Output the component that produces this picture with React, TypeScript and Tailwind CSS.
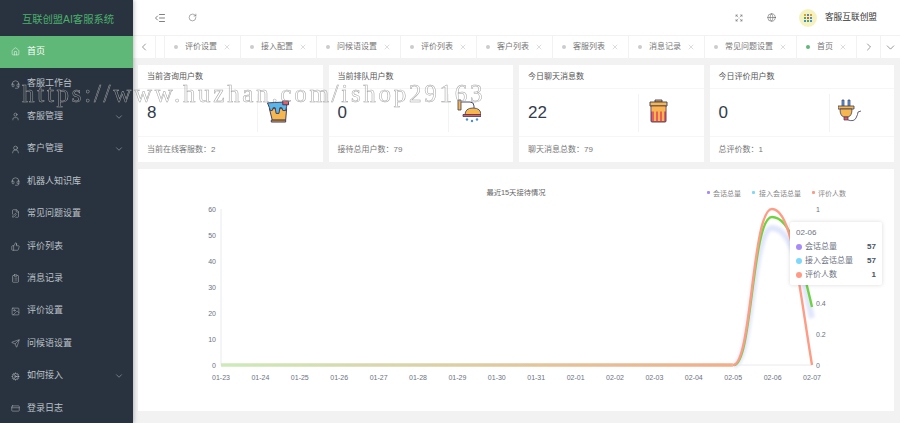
import {
  ChevronDown,
  ChevronLeft,
  ChevronRight,
  ClipboardList,
  Cog,
  CreditCard,
  Expand,
  FilePen,
  Globe,
  Headset,
  Home,
  ImageIcon,
  IndentDecrease,
  RotateCw,
  Send,
  ThumbsUp,
  User,
  UserRound,
  X,
  type LucideIcon,
} from 'lucide-react'

const NAV_ITEMS: { label: string; icon: LucideIcon; arrow?: boolean; active?: boolean }[] = [
  { label: '首页', icon: Home, active: true },
  { label: '客服工作台', icon: Headset },
  { label: '客服管理', icon: User, arrow: true },
  { label: '客户管理', icon: UserRound, arrow: true },
  { label: '机器人知识库', icon: Headset },
  { label: '常见问题设置', icon: FilePen },
  { label: '评价列表', icon: ThumbsUp },
  { label: '消息记录', icon: ClipboardList },
  { label: '评价设置', icon: ImageIcon },
  { label: '问候语设置', icon: Send },
  { label: '如何接入', icon: Cog, arrow: true },
  { label: '登录日志', icon: CreditCard },
]

const TABS = ['评价设置', '接入配置', '问候语设置', '评价列表', '客户列表', '客服列表', '消息记录', '常见问题设置', '首页']

const STAT_CARDS = [
  { title: '当前咨询用户数', value: '8', footer: '当前在线客服数：2', icon: <BucketIcon /> },
  { title: '当前排队用户数', value: '0', footer: '接待总用户数：79', icon: <ShowerIcon /> },
  { title: '今日聊天消息数', value: '22', footer: '聊天消息总数：79', icon: <TrashIcon /> },
  { title: '今日评价用户数', value: '0', footer: '总评价数：1', icon: <PlugIcon /> },
]

const X_LABELS = ['01-23', '01-24', '01-25', '01-26', '01-27', '01-28', '01-29', '01-30', '01-31', '02-01', '02-02', '02-03', '02-04', '02-05', '02-06', '02-07']
const LEFT_TICKS = ['60', '50', '40', '30', '20', '10', '0']
// 0.8 and 0.6 sit behind the tooltip
const RIGHT_TICKS = [
  { label: '1', y: 43 },
  { label: '0.4', y: 136.600 },
  { label: '0.2', y: 167.800 },
  { label: '0', y: 199 },
]

const TOOLTIP_ROWS = [
  { label: '会话总量', value: 57, color: 'bg-[#a78bfa]' },
  { label: '接入会话总量', value: 57, color: 'bg-[#7dd8fb]' },
  { label: '评价人数', value: 1, color: 'bg-[#ff9a85]' },
]

function BucketIcon() {
  return (
    <svg viewBox="0 0 24 24" className="h-[23px] w-6">
      <path d="M3 9h18l-1 12H6z" fill="#f6b84e" stroke="#3d3a5c" strokeWidth="1" />
      <path d="M5 21h15v2H5z" fill="#e9a33c" stroke="#3d3a5c" strokeWidth="1" />
      <path d="M1 3l20-1v5l-1 4h-3l-1-3-2 0-1 6h-3l-1-6h-2l-1 3H4L3 8z" fill="#58b7e8" stroke="#3d3a5c" strokeWidth="1" />
      <path d="M17 1h6v4h-6z" fill="#ea5a5f" stroke="#3d3a5c" strokeWidth="1" />
    </svg>
  )
}

function ShowerIcon() {
  return (
    <svg viewBox="0 0 24 24" className="h-6 w-6">
      <path d="M1 1h3v10H1z" fill="#f6b84e" stroke="#3d3a5c" strokeWidth="0.8" />
      <path d="M4 3h9q4 0 4 4v2" fill="none" stroke="#3d3a5c" strokeWidth="0.9" />
      <path d="M8 16q0-7 8-7t8 7z" fill="#f6b84e" stroke="#3d3a5c" strokeWidth="0.8" />
      <path d="M6 15.500h18v2H6z" fill="#ea5a5f" stroke="#3d3a5c" strokeWidth="0.8" />
      <circle cx="10" cy="20.500" r="1.200" fill="#4a8fd8" />
      <circle cx="15" cy="22" r="1.200" fill="#4a8fd8" />
      <circle cx="20" cy="20.500" r="1.200" fill="#4a8fd8" />
    </svg>
  )
}

function TrashIcon() {
  return (
    <svg viewBox="0 0 24 24" className="h-6 w-6">
      <path d="M8 1h7v2H8z" fill="#f6b84e" stroke="#3d3a5c" strokeWidth="0.9" />
      <path d="M3 3h17v4H3z" fill="#f6b84e" stroke="#3d3a5c" strokeWidth="0.9" />
      <path d="M4 7h15v15a1 1 0 0 1-1 1H5a1 1 0 0 1-1-1z" fill="#ea5a5f" stroke="#3d3a5c" strokeWidth="0.9" />
      <path d="M4.500 7.500h14v5h-14zM7 12h2v10H7zM11 12h2v10h-2zM15 12h2v10h-2z" fill="#f6b84e" />
    </svg>
  )
}

function PlugIcon() {
  return (
    <svg viewBox="0 0 24 24" className="h-6 w-6">
      <path d="M4 1h2v8H4zM10 1h2v8h-2z" fill="#58a6e8" stroke="#3d3a5c" strokeWidth="0.7" />
      <path d="M0 7h16v3H0z" fill="#f6b84e" stroke="#3d3a5c" strokeWidth="0.8" />
      <path d="M2 10h12q0 7-4 8H6q-4-1-4-8z" fill="#f6b84e" stroke="#3d3a5c" strokeWidth="0.8" />
      <path d="M6 18h4v3H6z" fill="#ea5a5f" stroke="#3d3a5c" strokeWidth="0.7" />
      <path d="M10 21q6 2 8-2t2-6l3-1" fill="none" stroke="#3d3a5c" strokeWidth="0.8" />
    </svg>
  )
}

function TrendChart() {
  return (
    <svg viewBox="0 0 756 242" className="block h-[242px] w-[756px] font-['Liberation_Sans','Noto_Sans_CJK_SC',sans-serif]">
      <defs>
        <linearGradient id="flatLine" gradientUnits="userSpaceOnUse" x1="83" y1="0" x2="600" y2="0">
          <stop offset="0" stopColor="#cdeabb" />
          <stop offset="1" stopColor="#f2ad88" />
        </linearGradient>
        <filter id="soft" x="-30%" y="-30%" width="160%" height="160%">
          <feGaussianBlur stdDeviation="1.800" />
        </filter>
      </defs>

      <text x="378" y="26" textAnchor="middle" fontSize="7.300" fill="#666">最近15天接待情况</text>
      <rect x="569" y="22" width="3" height="3" rx="1" fill="#a78bfa" />
      <text x="575" y="26.500" fontSize="7" fill="#888">会话总量</text>
      <rect x="614" y="22" width="3" height="3" rx="1" fill="#7dd8fb" />
      <text x="621" y="26.500" fontSize="7" fill="#888">接入会话总量</text>
      <rect x="674" y="22" width="3" height="3" rx="1" fill="#ff9a85" />
      <text x="680" y="26.500" fontSize="7" fill="#888">评价人数</text>

      <path d="M83 40V196H674" fill="none" stroke="#e3e5ea" strokeWidth="0.8" />
      {LEFT_TICKS.map((t, i) => (
        <text key={t} x="78" y={43 + i * 26} textAnchor="end" fontSize="7" fill="#6b7280">{t}</text>
      ))}
      {RIGHT_TICKS.map((t) => (
        <text key={t.label} x="678" y={t.y} fontSize="7" fill="#6b7280">{t.label}</text>
      ))}
      {X_LABELS.map((t, i) => (
        <text key={t} x={83 + i * 39.4} y="211" textAnchor="middle" fontSize="7" fill="#6b7280">{t}</text>
      ))}

      <path d="M83 196H595" fill="none" stroke="url(#flatLine)" strokeWidth="3.500" />
      <path d="M596 196C614 196 614 59 634 59C654 59 664 105 674 149" fill="none" stroke="#e0e6fb" strokeWidth="6" filter="url(#soft)" />
      <path d="M596 196C614 196 614 48 634 48C654 48 664 96 674 138" fill="none" stroke="#6fd23f" strokeWidth="2.400" />
      <path d="M595 196C614 196 614 40 634 40C654 40 660 111 674 196" fill="none" stroke="#ff9c85" strokeWidth="2.400" />
    </svg>
  )
}

export default function App() {
  return (
    <div className="relative flex h-[423px] w-[900px] overflow-hidden bg-[#f2f2f2] font-['Liberation_Sans','Noto_Sans_CJK_SC',sans-serif]">
      {/* sidebar */}
      <aside className="z-10 flex w-[133px] shrink-0 flex-col bg-[#29333f] shadow-[1px_0_4px_rgba(0,0,0,0.25)]">
        <div className="flex h-[35.500px] shrink-0 items-center justify-center pl-[3px] pt-[3px] text-[10.300px] text-[#4caf6d]">互联创盟AI客服系统</div>
        {NAV_ITEMS.map((item) => (
          <div
            key={item.label}
            className={`flex h-[32.450px] shrink-0 items-center pl-[11px] pr-[9px] text-[9px] ${item.active ? 'bg-[#5fb878] text-white' : 'text-[#bcc2c8]'}`}
          >
            <item.icon size={9} strokeWidth={1.3} className="shrink-0" />
            <span className="ml-[7px] flex-1">{item.label}</span>
            {item.arrow && <ChevronDown size={10} strokeWidth={1.2} />}
          </div>
        ))}
      </aside>

      <main className="flex min-w-0 flex-1 flex-col">
        {/* top bar */}
        <header className="flex h-[35px] items-center bg-white pl-[21px] pr-[23px] text-[#555]">
          <IndentDecrease size={12} strokeWidth={1.5} />
          <RotateCw size={9} strokeWidth={1.3} className="ml-[22px]" />
          <Expand size={8} strokeWidth={1.4} className="ml-auto" />
          <Globe size={9} strokeWidth={1.4} className="ml-[24px]" />
          <div className="ml-[23px] flex h-[18px] w-[18px] items-center justify-center rounded-full bg-[#f6f2c0]">
            <div className="grid grid-cols-3 gap-[1px]">
              <span className="h-[2px] w-[2px] bg-[#d9a021]" />
              <span className="h-[2px] w-[2px] bg-[#3f8fd0]" />
              <span className="h-[2px] w-[2px] bg-[#d9a021]" />
              <span className="h-[2px] w-[2px] bg-[#4aa860]" />
              <span className="h-[2px] w-[2px] bg-[#d75a4a]" />
              <span className="h-[2px] w-[2px] bg-[#3f8fd0]" />
              <span className="h-[2px] w-[2px] bg-[#3f8fd0]" />
              <span className="h-[2px] w-[2px] bg-[#4aa860]" />
              <span className="h-[2px] w-[2px] bg-[#3f8fd0]" />
            </div>
          </div>
          <span className="ml-[8px] text-[8.700px] text-[#333]">客服互联创盟</span>
        </header>

        {/* tab strip */}
        <div className="flex h-[23px] items-stretch border-t border-[#f2f2f2] bg-white text-[8px] text-[#777]">
          <div className="flex w-[23px] shrink-0 items-center justify-center border-r border-[#f2f2f2] text-[#555]">
            <ChevronLeft size={12} strokeWidth={1.2} />
          </div>
          <div className="w-[9px] shrink-0 border-r border-[#f2f2f2]" />
          {TABS.map((tab) => (
            <div key={tab} className="flex shrink-0 items-center border-r border-[#f2f2f2] pl-[9px] pr-[9px]">
              <span className={`h-[4px] w-[4px] rounded-full ${tab === '首页' ? 'bg-[#5fb878]' : 'bg-[#ccc]'}`} />
              <span className="ml-[7px]">{tab}</span>
              <X size={8} strokeWidth={1} className="ml-[6px] text-[#999]" />
            </div>
          ))}
          <div className="flex w-[24px] shrink-0 items-center justify-center border-r border-[#f2f2f2] text-[#555]">
            <ChevronRight size={12} strokeWidth={1.2} />
          </div>
          <div className="flex flex-1 items-center justify-center text-[#555]">
            <ChevronDown size={13} strokeWidth={1.1} />
          </div>
        </div>

        <div className="flex flex-col gap-[7px] pl-[5px] pr-[6px] pt-[7px]">
          {/* stat cards */}
          <div className="grid grid-cols-4 gap-[6px]">
            {STAT_CARDS.map((card) => (
              <div key={card.title} className="flex h-[97px] flex-col bg-white">
                <div className="flex h-[24px] items-center border-b border-[#f6f6f6] px-[9px] text-[8px] text-[#555]">{card.title}</div>
                <div className="flex h-[48px] items-center border-b border-[#f6f6f6]">
                  <div className="flex h-[38px] w-[120px] items-center border-r border-[#f3f3f6] px-[9px] text-[17px] text-[#333c4c]">{card.value}</div>
                  <div className="mb-[3px] ml-[8px]">{card.icon}</div>
                </div>
                <div className="flex h-[25px] items-center px-[9px] pt-[1px] text-[8px] text-[#777]">{card.footer}</div>
              </div>
            ))}
          </div>

          {/* chart panel */}
          <section className="relative h-[242px] bg-white">
            <TrendChart />
            <div className="absolute left-[652px] top-[53px] flex h-[63px] w-[92px] flex-col justify-center rounded-[2px] bg-white px-[6px] text-[8px] text-[#6b7280] shadow-[0_0_4px_rgba(0,0,0,0.15)]">
              <div className="leading-[14px]">02-06</div>
              {TOOLTIP_ROWS.map((row) => (
                <div key={row.label} className="flex items-center leading-[14px]">
                  <span className={`h-[6px] w-[6px] rounded-full ${row.color}`} />
                  <span className="ml-[3px] flex-1">{row.label}</span>
                  <span className="font-bold text-[#4b5563]">{row.value}</span>
                </div>
              ))}
            </div>
          </section>
        </div>
      </main>

      {/* site watermark */}
      <div className="pointer-events-none absolute left-[22px] top-[78px] z-20 whitespace-nowrap font-['Liberation_Serif',serif] text-[25px] leading-[32px] tracking-[2.720px] text-transparent [will-change:transform] [-webkit-text-stroke:0.5px_#a0a0a0]">
        https://www.huzhan.com/ishop29163
      </div>
    </div>
  )
}
